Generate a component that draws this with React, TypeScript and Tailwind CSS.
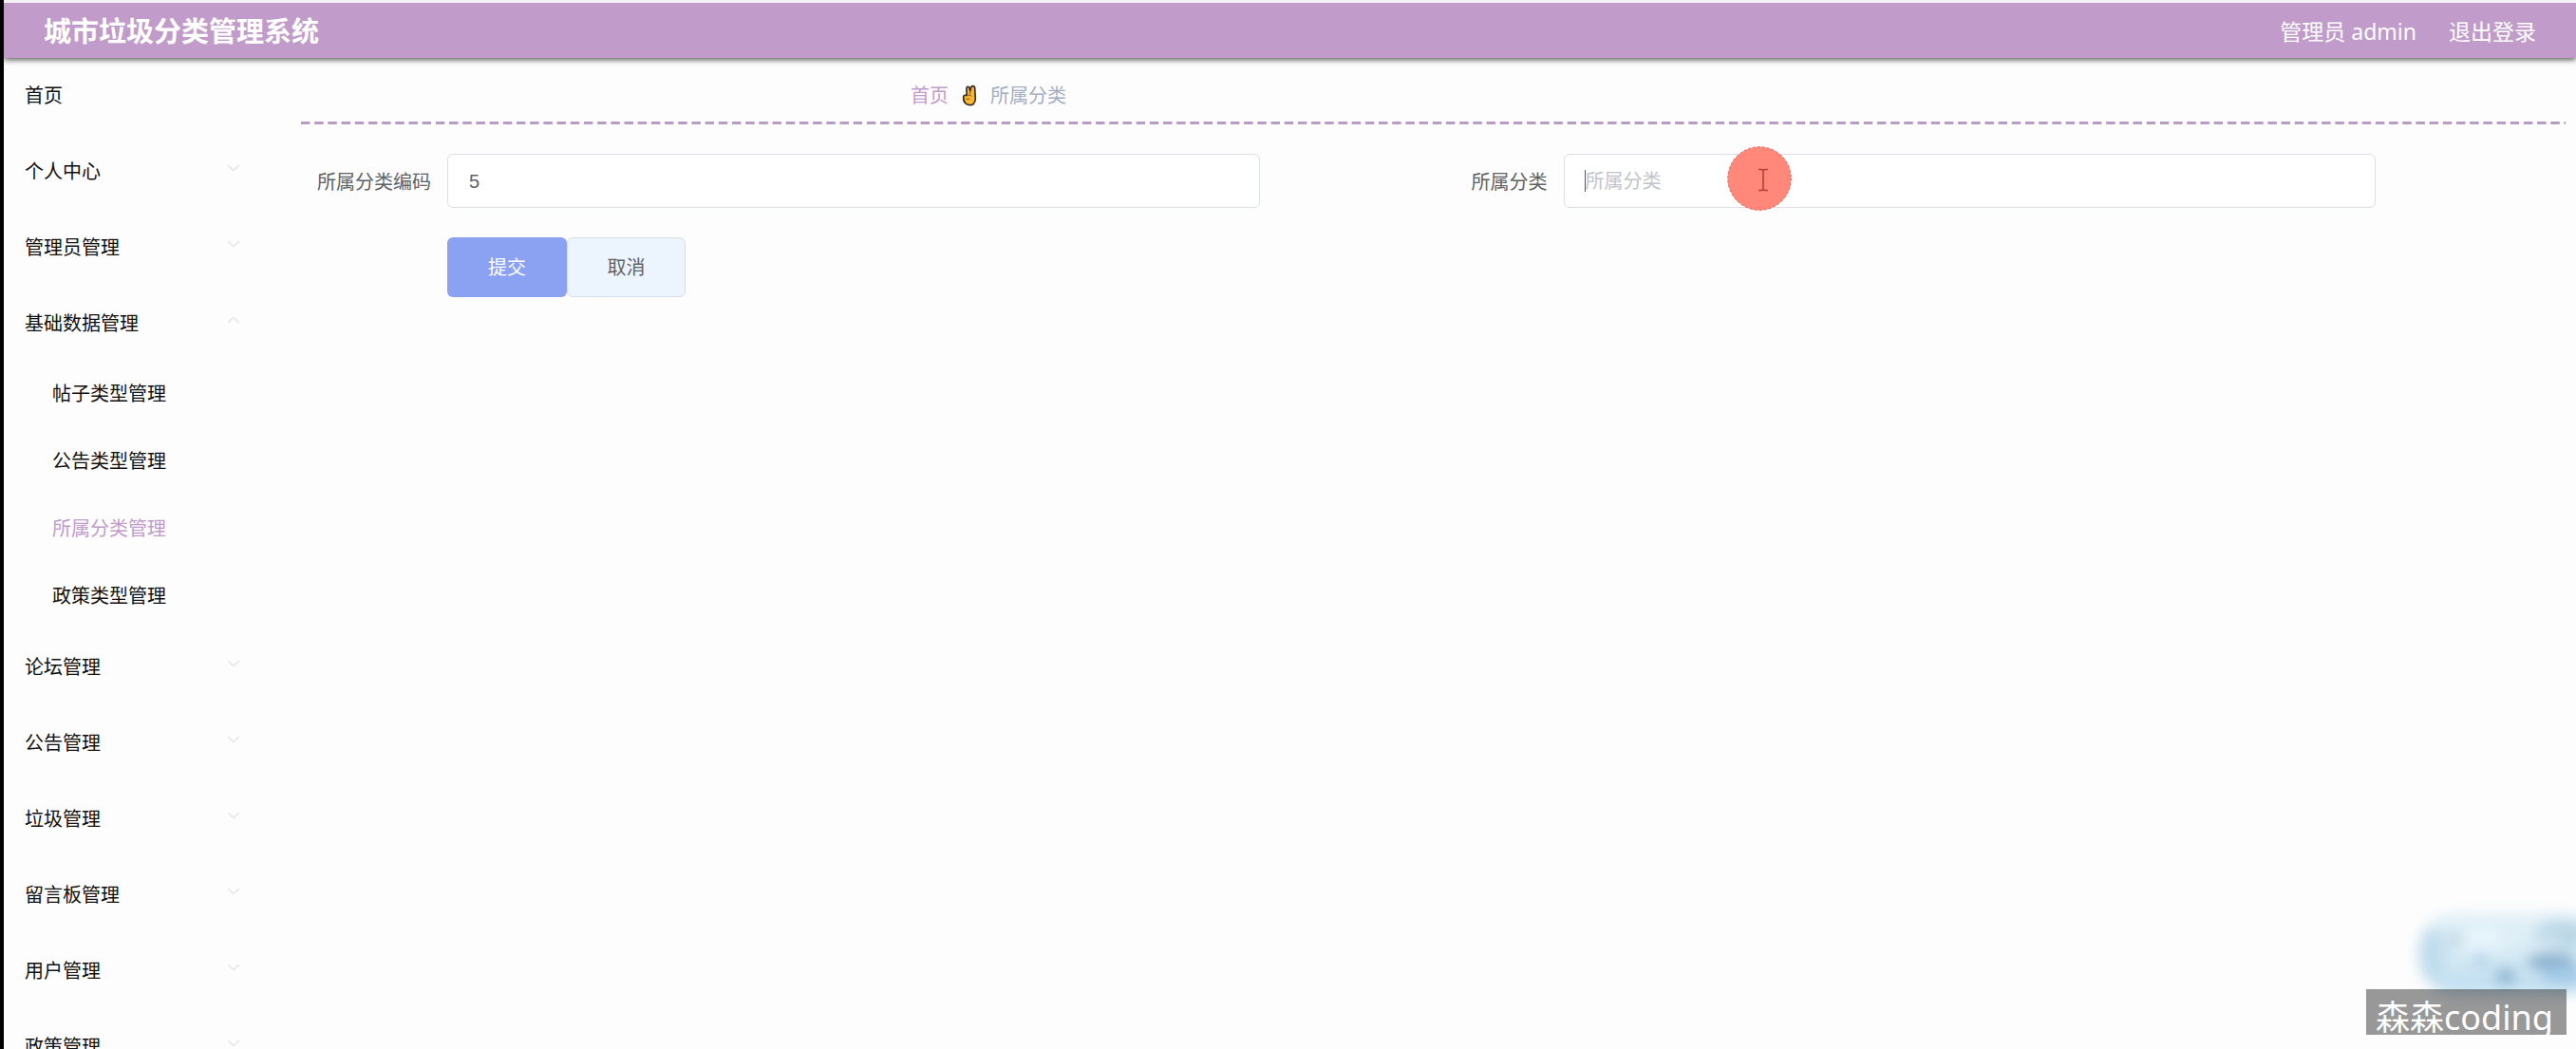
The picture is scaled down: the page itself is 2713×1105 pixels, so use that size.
import { useState } from "react";

type MenuEntry = { label: string; children?: string[]; leaf?: boolean };

const MENU: MenuEntry[] = [
  { label: "首页", leaf: true },
  { label: "个人中心" },
  { label: "管理员管理" },
  {
    label: "基础数据管理",
    children: ["帖子类型管理", "公告类型管理", "所属分类管理", "政策类型管理"],
  },
  { label: "论坛管理" },
  { label: "公告管理" },
  { label: "垃圾管理" },
  { label: "留言板管理" },
  { label: "用户管理" },
  { label: "政策管理" },
];

const ACTIVE = "所属分类管理";

function Chevron({ up }: { up: boolean }) {
  return (
    <svg
      viewBox="0 0 14 8"
      className="mb-2 h-2 w-3.5 text-[#e6e3ec]"
      fill="none"
      stroke="currentColor"
      strokeWidth="1.6"
      aria-hidden="true"
    >
      <path d={up ? "M1 7l6-5.5L13 7" : "M1 1l6 5.5L13 1"} />
    </svg>
  );
}

function Header() {
  return (
    <header className="relative flex h-[61px] shrink-0 items-center justify-between border-t-3 border-[#f6f1f8] bg-[#c19ccb] px-[42px] pt-0.5 text-white shadow-[0_2px_6px_rgba(0,0,0,0.65)]">
      <h1 className="text-[29px] leading-10 font-bold">城市垃圾分类管理系统</h1>
      <div className="flex items-center gap-[34px] text-[23px] leading-8">
        <span>管理员 admin</span>
        <button type="button">退出登录</button>
      </div>
    </header>
  );
}

function Sidebar() {
  const [open, setOpen] = useState<string | null>("基础数据管理");
  return (
    <nav className="w-[277px] shrink-0 text-xl text-[#111]">
      <ul>
        {MENU.map((item) => (
          <li key={item.label}>
            {item.leaf ? (
              <a href="#home" className="flex h-20 items-center pl-[22px]">
                {item.label}
              </a>
            ) : (
              <button
                type="button"
                aria-expanded={open === item.label}
                onClick={() => setOpen(open === item.label ? null : item.label)}
                className="flex h-20 w-full items-center justify-between pr-7 pl-[22px]"
              >
                {item.label}
                <Chevron up={open === item.label} />
              </button>
            )}
            {item.children && open === item.label && (
              <ul className="-mt-0.5">
                {item.children.map((child) => (
                  <li key={child}>
                    <a
                      href="#type"
                      className={
                        child === ACTIVE
                          ? "flex h-[71px] items-center pl-[51px] text-[#c19ccb]"
                          : "flex h-[71px] items-center pl-[51px]"
                      }
                    >
                      {child}
                    </a>
                  </li>
                ))}
              </ul>
            )}
          </li>
        ))}
      </ul>
    </nav>
  );
}

function VictoryHand() {
  return (
    <svg viewBox="0 0 17 24" className="h-[23px] w-4" aria-hidden="true">
      <path
        d="M5.500 12 5.200 4C5.200 1.800 8 1.500 8.600 3.800L9.300 7 10.200 3C10.600 1 14.600.900 14.500 3.200L15 12.500C15.800 17 15 19.500 12.800 21.800Q8.500 24 4.800 21.500C2 19.200 1.300 16.500 2 12.800Q3.200 11.200 5.500 12Z"
        fill="#fbb62f"
        stroke="#33261c"
        strokeWidth="1.700"
        strokeLinejoin="round"
      />
      <path
        d="M9.300 7 9 10.500M5.500 12Q8 10.500 10.500 12.500M5 16H8.500"
        fill="none"
        stroke="#7a5018"
        strokeWidth="1"
        strokeLinecap="round"
      />
    </svg>
  );
}

function Breadcrumb() {
  return (
    <div>
      <nav
        aria-label="breadcrumb"
        className="flex h-[67px] items-center pt-3 pl-[calc(27%-2px)] text-xl"
      >
        <a href="#home" className="text-[#c19ccb]">
          首页
        </a>
        <span className="mx-3.5">
          <VictoryHand />
        </span>
        <span className="text-[#a3aec2]">所属分类</span>
      </nav>
      <div className="h-[3px] bg-[linear-gradient(to_right,#b99cc4_64%,transparent_64%)] bg-[length:calc(100%/168)_3px]" />
    </div>
  );
}

const inputClass =
  "h-[57px] w-full rounded-md border border-[#dcdfe6] bg-white px-[22px] pt-0.5 font-['Liberation_Sans','Noto_Sans_CJK_SC',sans-serif] text-xl text-[#606266] outline-none placeholder:text-[#c0c4cc]";

/* Pointer highlight: translucent disc around the text cursor. */
function Pointer() {
  return (
    <svg
      viewBox="0 0 68 68"
      className="pointer-events-none absolute -top-2 left-[172px] size-[68px]"
      aria-hidden="true"
    >
      <circle cx="34" cy="34" r="33.500" fill="#ff7b6d" fillOpacity="0.9" />
      <circle
        cx="34"
        cy="34"
        r="33.300"
        fill="none"
        stroke="#dc564c"
        strokeDasharray="2 3"
      />
      <path
        d="M33 24.500h3.500l1.500 1 1.500-1H43M33 46.500h3.500l1.500-1 1.500 1H43M38 25.500v20"
        fill="none"
        stroke="#b04038"
        strokeWidth="1.600"
      />
    </svg>
  );
}

function EditForm() {
  const [code, setCode] = useState("5");
  const [name, setName] = useState("");
  return (
    <form
      className="px-[17px] pt-[31px] text-xl text-[#606266]"
      onSubmit={(e) => e.preventDefault()}
    >
      <div className="grid grid-cols-2">
        <div className="flex items-center">
          <label htmlFor="code" className="w-[137px] shrink-0 pt-0.5 pr-[17px] text-right">
            所属分类编码
          </label>
          <div className="mr-[183px] flex-1">
            <input
              id="code"
              className={inputClass}
              value={code}
              onChange={(e) => setCode(e.target.value)}
            />
          </div>
        </div>
        <div className="flex items-center">
          <label htmlFor="name" className="w-[137px] shrink-0 pt-0.5 pr-[17px] text-right">
            所属分类
          </label>
          <div className="relative mr-[183px] flex-1">
            <input
              id="name"
              className={inputClass}
              placeholder="所属分类"
              value={name}
              onChange={(e) => setName(e.target.value)}
            />
            <span className="absolute top-[17px] left-[22px] h-[23px] w-px bg-[#55565a]" />
            <Pointer />
          </div>
        </div>
      </div>
      <div className="mt-[31px] flex pl-[137px]">
        <button
          type="submit"
          className="h-[63px] w-[126px] rounded-md bg-[#8ba2f2] text-white"
        >
          提交
        </button>
        <button
          type="button"
          className="h-[63px] w-[125px] rounded-md border border-[#d8dfea] bg-[#ecf4fe]"
        >
          取消
        </button>
      </div>
    </form>
  );
}

function Mascot() {
  return (
    <svg
      viewBox="0 0 193 140"
      className="absolute right-0 bottom-[30px] h-[140px] w-[193px]"
      aria-hidden="true"
    >
      <defs>
        <filter id="soft" x="-20%" y="-30%" width="140%" height="160%">
          <feGaussianBlur stdDeviation="7" />
        </filter>
        <linearGradient id="body" x1="0" y1="0" x2="0" y2="1">
          <stop offset="0" stopColor="#e4f1f7" />
          <stop offset="0.45" stopColor="#d9ecf6" />
          <stop offset="1" stopColor="#bcdcef" />
        </linearGradient>
      </defs>
      <g filter="url(#soft)">
        <rect x="26" y="26" width="200" height="86" rx="40" fill="url(#body)" />
        <ellipse cx="42" cy="70" rx="13" ry="28" fill="#bfdcec" />
        <ellipse cx="92" cy="56" rx="26" ry="14" fill="#e6f4fb" />
        <ellipse cx="66" cy="55" rx="8" ry="8" fill="#bdd5e2" />
        <ellipse cx="93" cy="76" rx="9" ry="8" fill="#b5d2e8" />
        <ellipse cx="119" cy="93" rx="11" ry="9" fill="#8db4d0" />
        <ellipse cx="177" cy="50" rx="28" ry="16" fill="#bad7e6" />
        <ellipse cx="165" cy="56" rx="11" ry="8" fill="#cfe2ee" />
        <ellipse cx="167" cy="78" rx="27" ry="9" fill="#88aecd" />
        <ellipse cx="180" cy="92" rx="24" ry="10" fill="#a4cbe8" />
      </g>
    </svg>
  );
}

export default function App() {
  return (
    <div className="relative flex h-screen flex-col overflow-hidden border-l-4 border-black bg-[#fdfdfd] font-['Noto_Sans','Noto_Sans_CJK_SC',sans-serif]">
      <Header />
      <div className="flex min-h-0 flex-1">
        <Sidebar />
        <main className="min-w-0 flex-1 pr-[11px] pl-9">
          <Breadcrumb />
          <EditForm />
        </main>
      </div>
      <Mascot />
      <div className="absolute right-2.5 bottom-[15px] h-12 w-[211px] bg-black/40 pl-2.5 text-4xl leading-[60px] whitespace-nowrap text-white">
        森森coding
      </div>
    </div>
  );
}
